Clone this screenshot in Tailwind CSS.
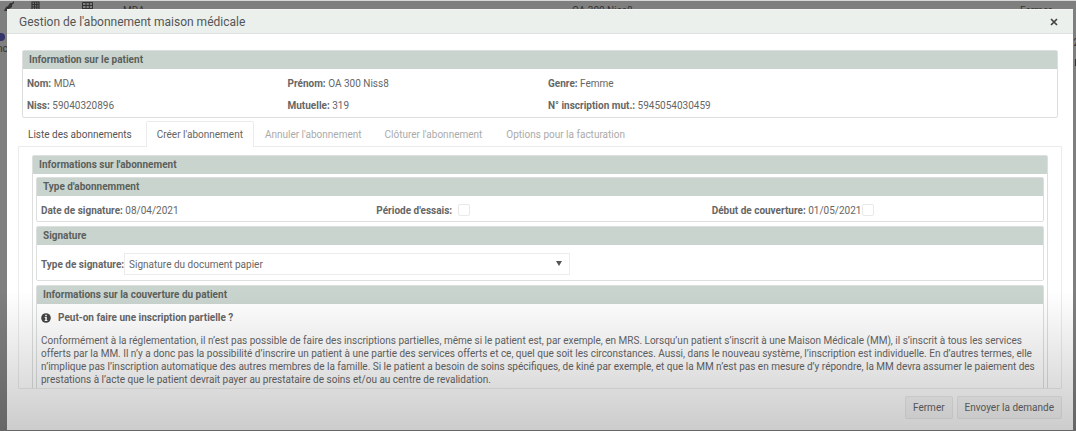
<!DOCTYPE html>
<html lang="fr">
<head>
    <meta charset="UTF-8">
    <meta name="viewport" content="width=device-width, initial-scale=1.0">
    <title>Gestion de l'abonnement maison médicale</title>
    <script src="https://cdn.jsdelivr.net/npm/@tailwindcss/browser@4"></script>
</head>
<body class="relative h-screen overflow-hidden bg-[#7f7f7f] font-[Roboto,sans-serif] text-[10px] leading-[13px] text-[#666]">

    <!-- Page behind the dialog -->
    <div class="absolute inset-0 overflow-hidden border-t border-[#d8d8d8] text-[#333]" aria-hidden="true">
        <svg class="absolute left-[4px] top-0 w-[11px] h-[11px]" viewBox="0 0 11 11"><path d="M0 10l2-4 2-1 2-3 2 0 2-2 0 2-2 2 0 2-3 2-2 2z" fill="#333"/></svg>
        <svg class="absolute left-[31px] top-0 w-[9px] h-[10px]" viewBox="0 0 9 10"><path d="M1 1h7v9H1zM1 3.500h7M1 6h7M3.500 1v9M5.800 1v9" fill="none" stroke="#333" stroke-width="1.200"/></svg>
        <svg class="absolute left-[82px] top-0 w-[11px] h-[10px]" viewBox="0 0 11 10"><path d="M.5 1.500h10V10H.5zM.5 4.500h10M.5 7.500h10M4 1.500V10M7.300 1.500V10" fill="none" stroke="#333"/></svg>
        <span class="absolute left-[123px] top-[3px]">MDA</span>
        <span class="absolute left-[572px] top-[3px]">OA 300 Niss8</span>
        <span class="absolute left-[1020px] top-[3px]">Fermer</span>
        <span class="absolute -left-[3px] top-[32px] size-2 rounded-full bg-[#35356b]"></span>
        <span class="absolute -left-[3px] top-[41px]">nc</span>
        <span class="absolute -right-[3px] top-[35px]">2</span>
        <span class="absolute right-0 top-[58px] h-[7px] w-px bg-[#333]"></span>
    </div>

    <div role="dialog" aria-labelledby="dialog-title" class="absolute top-[9px] left-[7px] right-[3px] bottom-px flex flex-col bg-white">
        <header class="flex h-[25px] shrink-0 items-center justify-between border-t border-b border-t-[#f4f6f5] border-b-[#dfe2e0] bg-[#ebf0ed] pl-3 pr-[14px]">
            <h1 id="dialog-title" class="text-[12px] leading-4 text-[#555]">Gestion de l'abonnement maison médicale</h1>
            <button type="button" aria-label="Close" class="p-px">
                <svg class="size-2" viewBox="0 0 8 8"><path d="M1 1l6 6M7 1L1 7" stroke="#444" stroke-width="1.700"/></svg>
            </button>
        </header>

        <section class="mx-[15px] mt-4 shrink-0 rounded-xs border border-[#dcdfdd]">
            <h2 class="h-[18px] bg-[#cad4cf] px-1.5 text-[10px] leading-[18px] font-bold text-[#5a5f5c]">Information sur le patient</h2>
            <div class="grid grid-cols-4 gap-x-4 gap-y-[9px] px-1 pt-2 pb-[5px]">
                <p><b>Nom:</b> MDA</p>
                <p><b>Prénom:</b> OA 300 Niss8</p>
                <p class="col-span-2"><b>Genre:</b> Femme</p>
                <p><b>Niss:</b> 59040320896</p>
                <p><b>Mutuelle:</b> 319</p>
                <p class="col-span-2"><b>N° inscription mut.:</b> 5945054030459</p>
            </div>
        </section>

        <nav class="relative z-10 mx-[11px] mt-[3px] -mb-px flex h-[26px] shrink-0 text-[10px] leading-[25px]">
            <a href="#" class="border border-transparent pr-[13px] pl-[9px] text-[#555]">Liste des abonnements</a>
            <a href="#" class="rounded-t-xs border border-b-0 border-[#ebebeb] bg-white px-[10px]">Créer l'abonnement</a>
            <a href="#" class="border border-transparent px-[10px] text-[#aaa]">Annuler l'abonnement</a>
            <a href="#" class="border border-transparent px-[11px] text-[#aaa]">Clôturer l'abonnement</a>
            <a href="#" class="border border-transparent px-[11px] text-[#aaa]">Options pour la facturation</a>
        </nav>

        <main class="mx-[11px] min-h-0 flex-1 overflow-hidden rounded-b-xs border border-[#ebebeb] px-[13px] pt-2">
            <section class="rounded-xs border border-[#dcdfdd]">
                <h2 class="h-[18px] bg-[#cad4cf] px-1.5 text-[10px] leading-[18px] font-bold text-[#5a5f5c]">Informations sur l'abonnement</h2>
                <div class="flex flex-col gap-1 px-[3px] pt-[3px]">
                    <section class="rounded-xs border border-[#dcdfdd]">
                        <h3 class="h-[18px] bg-[#cad4cf] px-1.5 text-[10px] leading-[18px] font-bold text-[#5a5f5c]">Type d'abonnemment</h3>
                        <div class="grid h-[25px] grid-cols-3 items-center gap-x-2 px-1 pt-[3px]">
                            <p><b>Date de signature:</b> 08/04/2021</p>
                            <div class="flex items-center gap-1.5">
                                <label for="essai" class="font-bold">Période d'essais:</label>
                                <input id="essai" type="checkbox" class="size-3 appearance-none rounded-xs border border-[#e9e9e9] bg-white">
                            </div>
                            <div class="flex items-center gap-px">
                                <label for="couverture"><b>Début de couverture:</b> 01/05/2021</label>
                                <input id="couverture" type="checkbox" class="size-3 appearance-none rounded-xs border border-[#e9e9e9] bg-white">
                            </div>
                        </div>
                    </section>

                    <section class="rounded-xs border border-[#dcdfdd]">
                        <h3 class="h-[18px] bg-[#cad4cf] px-1.5 text-[10px] leading-[18px] font-bold text-[#5a5f5c]">Signature</h3>
                        <div class="flex items-center px-1 pt-2 pb-[5px]">
                            <label for="signature" class="font-bold">Type de signature:</label>
                            <div class="relative w-[44.7%]">
                                <select id="signature" class="block h-[22px] w-full appearance-none border border-[#ececec] bg-white px-1 text-[10px]">
                                    <option>Signature du document papier</option>
                                </select>
                                <svg class="pointer-events-none absolute top-2 right-2 h-[5px] w-1.5" viewBox="0 0 6 5"><path d="M0 0h6L3 5z" fill="#555"/></svg>
                            </div>
                        </div>
                    </section>

                    <section class="rounded-xs border border-[#dcdfdd]">
                        <h3 class="h-[18px] bg-[#cad4cf] px-1.5 text-[10px] leading-[18px] font-bold text-[#5a5f5c]">Informations sur la couverture du patient</h3>
                        <div class="px-1 pt-[7px] pb-4">
                            <p class="flex items-center gap-[7px] font-bold">
                                <svg class="size-[10px]" viewBox="0 0 10 10"><circle cx="5" cy="5" r="4.800" fill="#444"/><path d="M4.200 1.700h1.600v1.500H4.200zM3.700 4h2.100v3h.6v1H3.700V7h.6V5h-.6z" fill="#fff"/></svg>
                                Peut-on faire une inscription partielle ?
                            </p>
                            <p class="mt-[10px]">Conformément à la réglementation, il n’est pas possible de faire des inscriptions partielles, même si le patient est, par exemple, en MRS. Lorsqu’un patient s’inscrit à une Maison Médicale (MM), il s’inscrit à tous les services offerts par la MM. Il n’y a donc pas la possibilité d’inscrire un patient à une partie des services offerts et ce, quel que soit les circonstances. Aussi, dans le nouveau système, l’inscription est individuelle. En d’autres termes, elle n’implique pas l’inscription automatique des autres membres de la famille. Si le patient a besoin de soins spécifiques, de kiné par exemple, et que la MM n’est pas en mesure d’y répondre, la MM devra assumer le paiement des prestations à l’acte que le patient devrait payer au prestataire de soins et/ou au centre de revalidation.</p>
                        </div>
                    </section>
                </div>
            </section>
        </main>

        <footer class="flex h-[41px] shrink-0 items-start justify-end gap-1 pt-[7px] pr-[11px]">
            <button type="button" class="h-[23px] rounded-xs border border-black/5 bg-black/3 px-[7px]">Fermer</button>
            <button type="button" class="h-[23px] rounded-xs border border-black/5 bg-black/3 px-[7px]">Envoyer la demande</button>
        </footer>
    </div>

    <!-- Shade rising from the bottom edge -->
    <div class="pointer-events-none absolute inset-x-0 bottom-0 z-20 h-[140px] bg-linear-to-t from-black/20 to-transparent"></div>
</body>
</html>
